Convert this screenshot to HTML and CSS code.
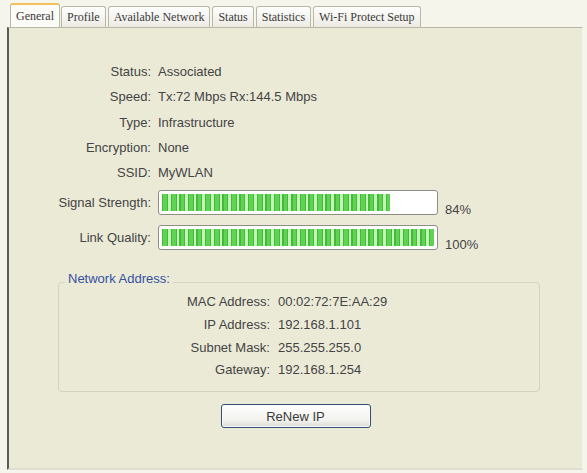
FILE: index.html
```html
<!DOCTYPE html>
<html lang="en">

<head>
  <meta charset="UTF-8" />
  <meta name="viewport" content="width=device-width, initial-scale=1.0" />
  <title>General</title>
  <link rel="stylesheet" href="styles.css">
</head>

<body>
  <div class="tabs">
    <div class="tab active">General</div>
    <div class="tab">Profile</div>
    <div class="tab">Available Network</div>
    <div class="tab">Status</div>
    <div class="tab">Statistics</div>
    <div class="tab">Wi-Fi Protect Setup</div>
  </div>

  <div class="panel">
    <div class="info">
      <span class="label">Status:</span><span>Associated</span>
      <span class="label">Speed:</span><span>Tx:72 Mbps Rx:144.5 Mbps</span>
      <span class="label">Type:</span><span>Infrastructure</span>
      <span class="label">Encryption:</span><span>None</span>
      <span class="label">SSID:</span><span>MyWLAN</span>
    </div>

    <div class="meters">
      <span class="label">Signal Strength:</span>
      <div class="meter"><div class="meter-fill" style="width: 84%"></div></div>
      <span class="percent">84%</span>

      <span class="label">Link Quality:</span>
      <div class="meter"><div class="meter-fill" style="width: 100%"></div></div>
      <span class="percent">100%</span>
    </div>

    <fieldset class="address">
      <legend>Network Address:</legend>
      <div class="address-grid">
        <span class="label">MAC Address:</span><span>00:02:72:7E:AA:29</span>
        <span class="label">IP Address:</span><span>192.168.1.101</span>
        <span class="label">Subnet Mask:</span><span>255.255.255.0</span>
        <span class="label">Gateway:</span><span>192.168.1.254</span>
      </div>
    </fieldset>

    <div class="actions">
      <button class="renew">ReNew IP</button>
    </div>
  </div>
</body>

</html>
```

FILE: styles.css
```css
* {
  margin: 0;
  padding: 0;
  box-sizing: border-box;
}

body {
  width: 587px;
  height: 473px;
  background: #f6f5ec;
  font-family: 'Liberation Sans', Arial, sans-serif;
  font-size: 13px;
  color: #444444;
  overflow: hidden;
}

/* tab strip */

.tabs {
  display: flex;
  align-items: flex-end;
  height: 27px;
  padding-left: 10px;
  gap: 2px;
}

.tab {
  height: 21px;
  padding: 3px 5px 0;
  font-family: 'Liberation Serif', 'Times New Roman', serif;
  font-size: 12px;
  color: #3a3a3a;
  border: 1px solid #b9b8a8;
  border-bottom: none;
  border-radius: 3px 3px 0 0;
  background: linear-gradient(#fefefe, #ecebe3);
}

.tab.active {
  height: 24px;
  padding-top: 4px;
  background: #fbfbf8;
  border-top: 2px solid #f2c05a;
  margin-right: -1px;
}

/* main page */

.panel {
  margin-left: 7px;
  width: 576px;
  height: 443px;
  background: #ebead7;
  border-left: 2px solid #5a5a56;
  border-top: 1px solid #b9b8a8;
  border-right: 1px solid #f4f4ee;
  border-bottom: 2px solid #e0dfd0;
  padding-top: 31px;
}

.label {
  text-align: right;
}

.info {
  display: grid;
  grid-template-columns: 142px auto;
  column-gap: 7px;
  grid-auto-rows: 25.3px;
  align-items: center;
}

.meters {
  display: grid;
  grid-template-columns: 142px 280px auto;
  column-gap: 7px;
  row-gap: 10px;
  grid-auto-rows: 25px;
  align-items: center;
  margin-top: 5px;
}

.meter {
  height: 25px;
  padding: 3px;
  background: #ffffff;
  border: 1px solid #8d8d86;
  border-radius: 3px;
}

.meter-fill {
  height: 100%;
  background: repeating-linear-gradient(to right,
      #45b93a 0, #45b93a 1.5px, #5fd352 1.5px, #5fd352 5px, #45b93a 5px, #45b93a 6px,
      #c4f4ba 6px, #c4f4ba 8.6px);
}

.percent {
  align-self: end;
  margin-bottom: -2px;
}

/* network address group */

.address {
  margin: 21px 0 0 49px;
  width: 482px;
  height: 121px;
  border: 1px solid #d4d3c2;
  border-radius: 4px;
}

.address legend {
  margin-left: 6px;
  padding: 0 3px 8px;
  color: #3650a0;
}

.address-grid {
  display: grid;
  grid-template-columns: 211px auto;
  column-gap: 8px;
  grid-auto-rows: 22.7px;
  align-items: center;
  margin-top: -4px;
}

.actions {
  display: flex;
  justify-content: center;
  margin-top: 12px;
}

.renew {
  width: 150px;
  height: 24px;
  font-family: 'Liberation Sans', Arial, sans-serif;
  font-size: 13px;
  color: #3a3a3a;
  border: 1px solid #364f72;
  border-radius: 3px;
  background: linear-gradient(#ffffff, #f2f2ee 70%, #dcdcd4);
  box-shadow: inset 0 0 0 1px #f8f8f8;
}
```
